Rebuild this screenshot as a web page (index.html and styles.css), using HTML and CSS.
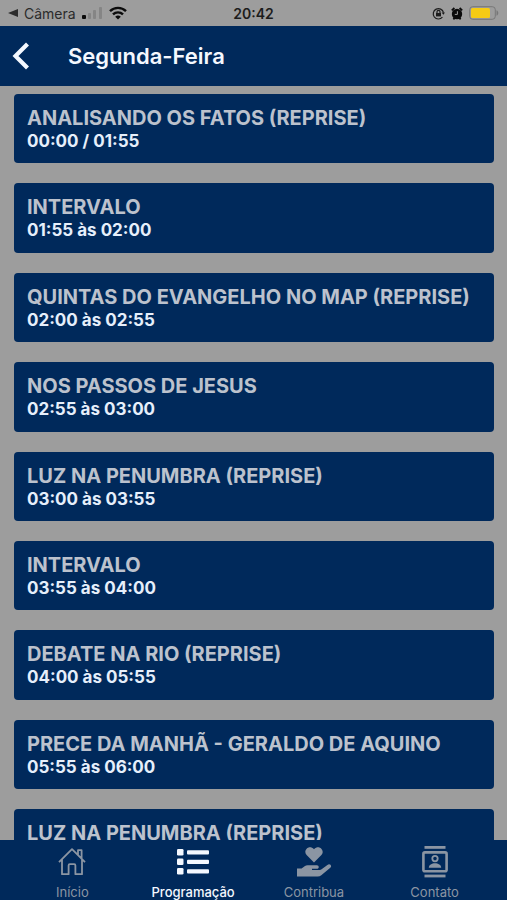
FILE: index.html
```html
<!DOCTYPE html>
<html lang="pt-BR">
<head>
  <meta charset="UTF-8">
  <meta name="viewport" content="width=device-width, initial-scale=1">
  <title>Segunda-Feira</title>
  <link rel="stylesheet" href="styles.css">
</head>
<body>
  <div class="status-bar">
    <div class="status-left">
      <a class="back-app" href="#">
        <svg width="10" height="10" viewBox="0 0 10 10"><path d="M10 1v8L0 5z" fill="currentColor"/></svg>
        Câmera
      </a>
      <svg width="21" height="14" viewBox="0 0 21 14">
        <rect x="0" y="9" width="4" height="4" rx="1" fill="#0b0b0b"/>
        <rect x="6" y="7" width="3" height="6" rx="1" fill="#858585"/>
        <rect x="11" y="4" width="3" height="9" rx="1" fill="#858585"/>
        <rect x="17" y="1" width="3" height="12" rx="1" fill="#858585"/>
      </svg>
      <svg width="18" height="14" viewBox="0 0 18 14" fill="none" stroke="#0b0b0b" stroke-width="2.4">
        <path d="M1 5.2a11.4 11.4 0 0 1 16 0"/>
        <path d="M4 8.4a7.2 7.2 0 0 1 10 0"/>
        <path d="M9 13.6 6.2 10.7a4.2 4.2 0 0 1 5.6 0z" fill="#0b0b0b" stroke="none"/>
      </svg>
    </div>
    <div class="clock">20:42</div>
    <div class="status-right">
      <svg width="13" height="13" viewBox="0 0 13 13" fill="none" stroke="#1c1c1c" stroke-width="1.2">
        <path d="M10.4 10.2a5.2 5.2 0 1 1 1.1-4.6"/>
        <path d="M9.6 5.4h3.4l-1.6 2.4z" fill="#1c1c1c" stroke="none"/>
        <rect x="4" y="6" width="5" height="3.4" fill="#1c1c1c" stroke="none"/>
        <path d="M5 6V4.8a1.5 1.5 0 0 1 3 0V6"/>
      </svg>
      <svg width="12" height="13" viewBox="0 0 12 13">
        <path d="M.8 3.4 3.4 1M11.2 3.4 8.6 1M2.4 12.4l1.2-1.6M9.6 12.4l-1.2-1.6" stroke="#0b0b0b" stroke-width="1.8"/>
        <circle cx="6" cy="7" r="5.2" fill="#0b0b0b"/>
        <path d="M6.4 4.2v3.2H3.8" fill="none" stroke="#9b9b9b"/>
      </svg>
      <svg width="30" height="14" viewBox="0 0 30 14">
        <rect x=".7" y=".7" width="25.6" height="12.6" rx="3" fill="none" stroke="#777"/>
        <rect x="2" y="2" width="19" height="10" rx="1.5" fill="#f5cb14"/>
        <path d="M27.5 4.3c2.4 1 2.4 4.4 0 5.4z" fill="#777"/>
      </svg>
    </div>
  </div>

  <header class="top-bar">
    <button class="back-btn" aria-label="Voltar">
      <svg width="18" height="28" viewBox="0 0 18 28"><path d="M15.5 2 3.5 14l12 12" fill="none" stroke="currentColor" stroke-width="4.2"/></svg>
    </button>
    <h1>Segunda-Feira</h1>
  </header>

  <main class="schedule">
    <div class="program">
      <h2>ANALISANDO OS FATOS (REPRISE)</h2>
      <p>00:00 / 01:55</p>
    </div>
    <div class="program">
      <h2>INTERVALO</h2>
      <p>01:55 às 02:00</p>
    </div>
    <div class="program">
      <h2>QUINTAS DO EVANGELHO NO MAP (REPRISE)</h2>
      <p>02:00 às 02:55</p>
    </div>
    <div class="program">
      <h2>NOS PASSOS DE JESUS</h2>
      <p>02:55 às 03:00</p>
    </div>
    <div class="program">
      <h2>LUZ NA PENUMBRA (REPRISE)</h2>
      <p>03:00 às 03:55</p>
    </div>
    <div class="program">
      <h2>INTERVALO</h2>
      <p>03:55 às 04:00</p>
    </div>
    <div class="program">
      <h2>DEBATE NA RIO (REPRISE)</h2>
      <p>04:00 às 05:55</p>
    </div>
    <div class="program">
      <h2>PRECE DA MANHÃ - GERALDO DE AQUINO</h2>
      <p>05:55 às 06:00</p>
    </div>
    <div class="program">
      <h2>LUZ NA PENUMBRA (REPRISE)</h2>
    </div>
  </main>

  <nav class="tab-bar">
    <a class="tab" href="#">
      <svg width="32" height="32" viewBox="0 0 32 32" fill="none" stroke="currentColor" stroke-width="1.8" stroke-linejoin="round">
        <path d="M3 16.2 16 3.2l13 13M22 9V4.2h3.6v8.4M6 13.4v14.8h6.6V19.4q0-1.2 1.2-1.2h4.4q1.2 0 1.2 1.2v8.8H26V13.4"/>
      </svg>
      Início
    </a>
    <a class="tab active" href="#">
      <svg width="32" height="32" viewBox="0 0 32 32" fill="currentColor">
        <rect x="0" y="3" width="6.5" height="6.5" rx="1.3"/>
        <rect x="0" y="12.6" width="6.5" height="6.5" rx="1.3"/>
        <rect x="0" y="22" width="6.5" height="6.5" rx="1.3"/>
        <rect x="10" y="4.2" width="22" height="4.2" rx="1"/>
        <rect x="10" y="13.8" width="22" height="4.2" rx="1"/>
        <rect x="10" y="23.2" width="22" height="4.2" rx="1"/>
      </svg>
      Programação
    </a>
    <a class="tab" href="#">
      <svg width="36" height="32" viewBox="0 0 36 32" fill="currentColor">
        <path d="M18 16.5 10.6 9C6.6 4.8 12.8-2.2 18 3.2c5.2-5.4 11.4 1.6 7.4 5.8z"/>
        <path d="M1 22.5h4.6l3-2.3q1.4-1 3-1h9.2c2.6 0 2.6 3.6 0 3.6H16v1.2h7.6q1.2 0 2-.7l5.8-4.4c2.6-1.8 5 1 2.9 2.9l-9 7.4q-1.6 1.3-3.6 1.3H1z"/>
      </svg>
      Contribua
    </a>
    <a class="tab" href="#">
      <svg width="32" height="32" viewBox="0 0 32 32" fill="currentColor">
        <rect x="5.5" y="0" width="21" height="2.8"/>
        <rect x="5.5" y="28.6" width="21" height="2.8"/>
        <rect x="4.4" y="6.4" width="23.2" height="18.8" rx="1.5" fill="none" stroke="currentColor" stroke-width="2.6"/>
        <circle cx="16" cy="12.6" r="2.7" fill="none" stroke="currentColor" stroke-width="1.8"/>
        <path d="M9.8 21.8c0-6.2 12.4-6.2 12.4 0z"/>
      </svg>
      Contato
    </a>
  </nav>
</body>
</html>
```
FILE: styles.css
```css
* {
  box-sizing: border-box;
}

body {
  font-family: Inter, "Liberation Sans", sans-serif;
  margin: 0;
  height: 100vh;
  display: flex;
  flex-direction: column;
  background: #9d9d9d;
  color: #e6effb;
}

h1, h2, p {
  margin: 0;
}

svg {
  display: block;
}

.status-bar {
  display: grid;
  grid-template-columns: 1fr auto 1fr;
  align-items: center;
  height: 26px;
  padding: 0 8px;
  color: #1c1c1c;
  font-size: 14px;
}

.status-left, .status-right {
  display: flex;
  align-items: center;
  gap: 6px;
}

.status-right {
  justify-content: flex-end;
}

.back-app {
  display: flex;
  align-items: center;
  gap: 6px;
  color: #2b2b2b;
  text-decoration: none;
}

.clock {
  font-weight: 600;
}

.top-bar {
  display: flex;
  align-items: center;
  gap: 38px;
  height: 60px;
  padding: 0 12px;
  background: #00295b;
  color: #f4f8ff;
}

.top-bar h1 {
  font-size: 22px;
  font-weight: 600;
}

.back-btn {
  padding: 0;
  border: none;
  background: none;
  color: inherit;
  cursor: pointer;
}

.schedule {
  flex: 1;
  min-height: 0;
  overflow-y: auto;
  scrollbar-width: none;
  display: flex;
  flex-direction: column;
  gap: 20px;
  padding: 8px 13px 0 14px;
}

.program {
  flex: none;
  padding: 12px 13px;
  border-radius: 4px;
  background: #00295b;
  line-height: 1.2;
}

.program h2 {
  font-size: 20px;
  font-weight: 700;
  line-height: 25px;
  color: #bcc2cd;
}

.program p {
  font-size: 17px;
  font-weight: 700;
}

.tab-bar {
  display: flex;
  height: 60px;
  padding: 0 12px;
  background: #00295b;
}

.tab {
  flex: 1;
  display: flex;
  flex-direction: column;
  align-items: center;
  gap: 6px;
  padding-top: 6px;
  color: #8b95a3;
  font-size: 13px;
  line-height: 16px;
  text-decoration: none;
}

.tab.active {
  color: #f4f8ff;
  font-weight: 500;
}
```
